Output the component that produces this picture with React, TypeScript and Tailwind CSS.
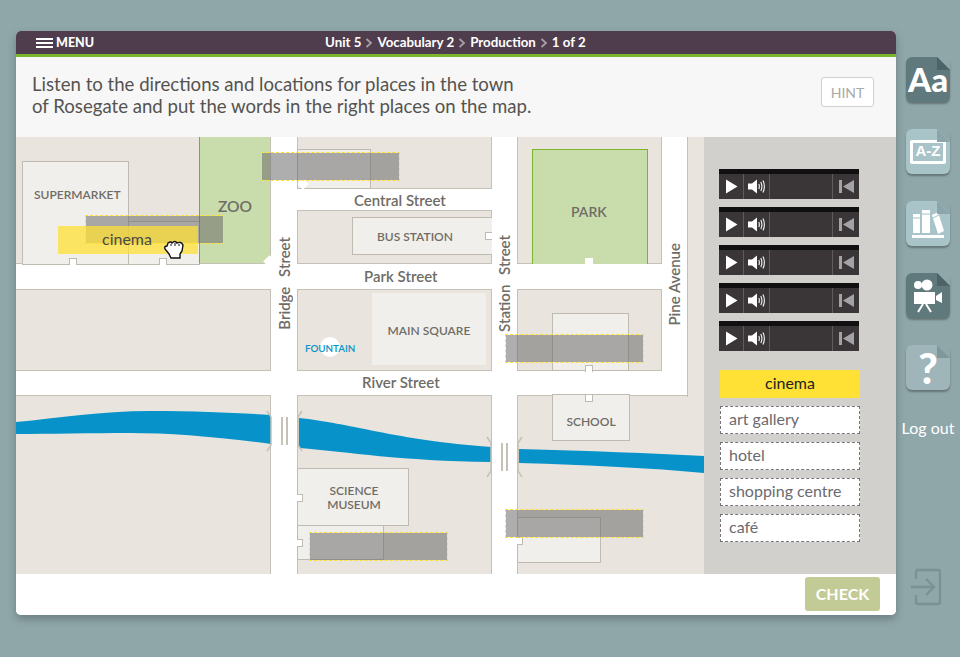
import { Fragment } from "react";

const crumbs = ["Unit 5", "Vocabulary 2", "Production", "1 of 2"];
const words = ["art gallery", "hotel", "shopping centre", "café"];

function Chevron() {
  return (
    <svg width="8" height="10" viewBox="0 0 8 10" className="mx-[4px]">
      <path d="M1.5 1 L6 5 L1.5 9" fill="none" stroke="#a79ea6" strokeWidth="1.8" />
    </svg>
  );
}

function AudioBar() {
  return (
    <div className="w-[140px] h-[30px] bg-[#3a3637] border-t-[5px] border-[#111010] flex">
      <div className="w-[25px] flex items-center justify-center border-r border-[#605c5d]">
        <svg width="13" height="15" viewBox="0 0 13 15">
          <path d="M1 0.5 L12.5 7.5 L1 14.5 Z" fill="#fff" />
        </svg>
      </div>
      <div className="w-[26px] flex items-center justify-center border-r border-[#605c5d]">
        <svg width="18" height="15" viewBox="0 0 18 15">
          <path d="M0 4.5 H4 L9 0.5 V14.5 L4 10.5 H0 Z" fill="#fff" />
          <path d="M10.8 5 Q12 7.5 10.8 10 M12.8 3 Q15 7.5 12.8 12 M15 1.5 Q17.8 7.5 15 13.5" fill="none" stroke="#e8e8e8" strokeWidth="1.2" />
        </svg>
      </div>
      <div className="w-[63px] border-r border-[#605c5d]" />
      <div className="flex-1 flex items-center justify-center">
        <svg width="15" height="13" viewBox="0 0 15 13">
          <path d="M0 0 H3 V13 H0 Z M15 0 V13 L4 6.5 Z" fill="#a3a3a5" />
        </svg>
      </div>
    </div>
  );
}

function Fold({ dark }: { dark: string }) {
  return (
    <svg width="13" height="13" viewBox="0 0 13 13" className="absolute top-0 right-0">
      <path d="M0 0 H13 V13 Z" fill="#90a7aa" />
      <path d="M0 0 L13 13 H0 Z" fill={dark} />
    </svg>
  );
}

function RiverMap() {
  return (
    <svg width="688" height="437" viewBox="16 137 688 437" className="absolute left-0 top-0">
      <path d="M16 422 C60 418 100 411 150 411 C200 411 240 413 271 415 V444 C220 437 170 433 130 433 C90 433 50 434 16 434 Z" fill="#0793c9" />
      <path d="M299 418 C350 423 395 440 491 447 V462 C400 461 350 452 299 448 Z" fill="#0793c9" />
      <path d="M519 449 C590 451 650 453 704 456 V473 C650 468 590 465 519 463 Z" fill="#0793c9" />
      <g fill="none" stroke="#c6c1b7" strokeWidth="1.5">
        <path d="M267 411 L271 417 V445 L267 451" />
        <path d="M302 411 L298 417 V445 L302 451" />
        <path d="M487 437 L491 443 V471 L487 477" />
        <path d="M522 437 L518 443 V471 L522 477" />
      </g>
      <g fill="#c6c1b7">
        <rect x="281" y="417" width="2" height="28" />
        <rect x="286" y="417" width="2" height="28" />
        <rect x="501" y="443" width="2" height="28" />
        <rect x="506" y="443" width="2" height="28" />
      </g>
    </svg>
  );
}

function TownMap() {
  const block = "absolute bg-[#e9e4dd] border border-[#c6c1b7]";
  const bldg = "absolute bg-[#f1efeb] border border-[#c0bbb1]";
  const notchUp = "absolute bg-white border border-[#c0bbb1] border-b-0 w-[8px] h-[7px]";
  const notchDown = "absolute bg-white border border-[#c0bbb1] border-t-0 w-[8px] h-[7px]";
  const notchSide = "absolute bg-white border border-[#c0bbb1] border-l-0 w-[6px] h-[8px]";
  const label = "absolute text-[#6f6c66] font-semibold text-[12px] leading-[14px] text-center";
  const street = "absolute text-[#6f6c66] font-semibold text-[15px] leading-[16px] whitespace-nowrap";
  const vstreet = "absolute text-[#6f6c66] font-semibold text-[15px] leading-[16px] whitespace-nowrap [writing-mode:vertical-rl] rotate-180";
  const drop = "absolute w-[139px] h-[29px] bg-[rgba(107,107,107,0.55)] bg-clip-padding border border-dashed border-[#ffe035]";

  return (
    <div className="relative w-[688px] h-[437px] bg-white overflow-hidden">
      <div className={`${block} left-[-2px] top-[-2px] w-[257px] h-[129px]`} />
      <div className={`${bldg} left-[6px] top-[24px] w-[107px] h-[104px]`} />
      <div className={`${bldg} left-[112px] top-[84px] w-[72px] h-[44px]`} />
      <div className={`${notchUp} left-[53px] top-[121px]`} />
      <div className={`${notchUp} left-[143px] top-[121px]`} />
      <div className="absolute left-[183px] top-0 w-[72px] h-[127px] bg-[#c9dcab] border-l border-l-[#7f9f5f] border-r border-b border-[#c6c1b7]" />
      <div className="absolute left-[249px] top-[120px] w-[9px] h-[9px] rotate-45 bg-white" />
      <div className={`${block} left-[-2px] top-[152px] w-[257px] h-[82px]`} />

      <div className={`${block} left-[281px] top-[-2px] w-[195px] h-[54px]`} />
      <div className={`${bldg} left-[281px] top-[12px] w-[74px] h-[40px]`} />
      <div className="absolute left-[283px] top-[43px] w-[8px] h-[8px] rotate-45 bg-white" />
      <div className={`${block} left-[281px] top-[73px] w-[195px] h-[54px]`} />
      <div className={`${bldg} left-[336px] top-[80px] w-[140px] h-[38px] border-r-0`} />
      <div className="absolute left-[469px] top-[95px] w-[7px] h-[8px] bg-white border border-[#c0bbb1] border-r-0" />
      <div className={`${block} left-[281px] top-[152px] w-[195px] h-[82px]`} />
      <div className="absolute left-[356px] top-[156px] w-[114px] h-[72px] bg-[#f1efeb]" />
      <div className="absolute left-[304px] top-[200px] w-[20px] h-[20px] rounded-full bg-white" />

      <div className={`${block} left-[501px] top-[-2px] w-[145px] h-[129px]`} />
      <div className="absolute left-[516px] top-[12px] w-[116px] h-[115px] bg-[#c9dcab] border border-[#7ab62c] border-b-0" />
      <div className="absolute left-[569px] top-[121px] w-[8px] h-[7px] bg-white" />
      <div className={`${block} left-[501px] top-[152px] w-[145px] h-[82px]`} />
      <div className={`${bldg} left-[536px] top-[176px] w-[77px] h-[58px]`} />
      <div className={`${notchUp} left-[569px] top-[228px]`} />

      <div className={`${block} left-[-2px] top-[258px] w-[257px] h-[181px]`} />
      <div className={`${block} left-[281px] top-[258px] w-[195px] h-[181px]`} />
      <div className={`${block} left-[501px] top-[258px] w-[189px] h-[181px]`} />
      <div className="absolute left-[671px] top-[-2px] w-[19px] h-[262px] bg-[#e9e4dd] border-l border-[#c6c1b7]" />
      <div className={`${bldg} left-[536px] top-[257px] w-[78px] h-[47px]`} />
      <div className={`${notchDown} left-[569px] top-[258px]`} />
      <div className={`${bldg} left-[281px] top-[331px] w-[112px] h-[58px]`} />
      <div className={`${bldg} left-[281px] top-[388px] w-[87px] h-[35px]`} />
      <div className={`${notchSide} left-[281px] top-[357px]`} />
      <div className={`${notchSide} left-[281px] top-[402px]`} />
      <div className={`${bldg} left-[501px] top-[380px] w-[84px] h-[46px]`} />
      <div className={`${notchSide} left-[501px] top-[400px]`} />

      <RiverMap />

      <span className={`${label} left-[18px] top-[51px] w-[84px] text-[11.5px]`}>SUPERMARKET</span>
      <span className="absolute left-[202px] top-[60px] text-[#6f6c66] font-semibold text-[15.5px] leading-[18px]">ZOO</span>
      <span className={`${label} left-[357px] top-[93px] w-[84px]`}>BUS STATION</span>
      <span className="absolute left-[555px] top-[66px] text-[#6f6c66] font-semibold text-[14px] leading-[18px]">PARK</span>
      <span className={`${label} left-[366px] top-[187px] w-[94px]`}>MAIN SQUARE</span>
      <span className="absolute left-[289px] top-[205px] text-[#0793c9] font-semibold text-[9.8px] leading-[13px]">FOUNTAIN</span>
      <span className={`${label} left-[536px] top-[278px] w-[78px]`}>SCHOOL</span>
      <span className={`${label} left-[295px] top-[347px] w-[86px]`}>
        SCIENCE
        <br />
        MUSEUM
      </span>

      <span className={`${street} left-[338px] top-[55px]`}>Central Street</span>
      <span className={`${street} left-[348px] top-[131px]`}>Park Street</span>
      <span className={`${street} left-[346px] top-[237px]`}>River Street</span>
      <span className={`${vstreet} left-[260px] top-[100px] [word-spacing:6px]`}>Bridge Street</span>
      <span className={`${vstreet} left-[480px] top-[98px] [word-spacing:6px]`}>Station Street</span>
      <span className={`${vstreet} left-[650px] top-[106px]`}>Pine Avenue</span>

      <div className={`${drop} left-[245px] top-[15px]`} />
      <div className={`${drop} left-[69px] top-[78px]`} />
      <div className={`${drop} left-[489px] top-[197px]`} />
      <div className={`${drop} left-[489px] top-[372px]`} />
      <div className={`${drop} left-[293px] top-[395px]`} />

      <div className="absolute left-[42px] top-[89px] w-[140px] h-[28px] bg-[#ffe035]/75 rounded-[1px] flex items-center justify-center pr-[2px] pb-[3px] text-[16px] text-[#4a4a44]">
        cinema
      </div>
      <svg width="22" height="19" viewBox="0 0 22 19" className="absolute left-[147px] top-[103px]">
        <path
          d="M2 9 Q1 6 4 6 L5 3 Q8 1 9 3 Q12 0 14 3 Q18 1 20 5 L19 11 L17 14 V18 H8 L6 14 Z"
          fill="#fff"
          stroke="#111"
          strokeWidth="1.4"
        />
        <path d="M8 4 V6 M12 3 V6 M16 4 V6" stroke="#111" strokeWidth="1" />
      </svg>
    </div>
  );
}

export default function App() {
  const tile = "relative w-[44px] h-[45px] rounded-[6px] flex items-center justify-center text-white font-bold shadow-[0_2px_2px_rgba(0,0,0,0.3)]";

  return (
    <div className="w-[960px] h-[657px] bg-[#90a7aa] flex font-['Lato','Liberation_Sans',sans-serif] overflow-hidden">
      <div className="w-[896px] pt-[31px] pl-4">
        <div className="w-[880px] h-[584px] rounded-[5px] overflow-hidden flex flex-col bg-white shadow-[0_4px_8px_rgba(0,0,0,0.25)]">
          <div className="h-[23px] bg-[#4f3d4d] flex items-center pl-[20px] text-white text-[13.3px] font-bold">
            <div className="w-[17px] flex flex-col gap-[2px]">
              <div className="h-[2px] bg-white" />
              <div className="h-[2px] bg-white" />
              <div className="h-[2px] bg-white" />
            </div>
            <span className="ml-[3px] mt-[1px] font-black text-[12.5px]">MENU</span>
            <div className="flex items-center ml-[231px]">
              {crumbs.map((c, i) => (
                <Fragment key={c}>
                  {i > 0 && <Chevron />}
                  <span>{c}</span>
                </Fragment>
              ))}
            </div>
          </div>
          <div className="h-[3px] bg-[#7ab62c]" />
          <div className="h-[80px] bg-[#f7f7f7] flex items-start justify-between pl-4 pr-[22px]">
            <p className="mt-[16px] text-[18.6px] leading-[22px] text-[#55534f]">
              Listen to the directions and locations for places in the town
              <br />
              of Rosegate and put the words in the right places on the map.
            </p>
            <div className="mt-[20px] w-[53px] h-[30px] border border-[#cfcfcf] rounded-[3px] bg-white flex items-center justify-center text-[14px] text-[#a9a9a9]">
              HINT
            </div>
          </div>
          <div className="flex h-[437px]">
            <TownMap />
            <div className="w-[192px] bg-[#d1d0cc] pt-[32px] pl-[15px]">
              <div className="flex flex-col gap-[8px]">
                <AudioBar />
                <AudioBar />
                <AudioBar />
                <AudioBar />
                <AudioBar />
              </div>
              <div className="mt-[19px] ml-[1px] w-[140px] flex flex-col gap-[8px] text-[16px]">
                <div className="h-[28px] bg-[#ffe035] flex items-center justify-center pb-[3px] text-[#222]">cinema</div>
                {words.map((w) => (
                  <div key={w} className="h-[28px] bg-white border border-dashed border-[#77757a] flex items-center pl-[8px] pb-[2px] text-[#6c6a6e]">
                    {w}
                  </div>
                ))}
              </div>
            </div>
          </div>
          <div className="flex-1 bg-white flex justify-end items-start pt-[3px] pr-[16px]">
            <div className="w-[75px] h-[34px] rounded-[3px] bg-[#c2cb96] flex items-center justify-center text-white font-bold text-[16px]">
              CHECK
            </div>
          </div>
        </div>
      </div>

      <div className="flex-1 flex flex-col items-center pt-[57px] gap-[27px] text-white">
        <div className={`${tile} bg-[#5f797d] text-[33px]`}>
          <Fold dark="#4c6367" />
          <span className="font-black leading-none">Aa</span>
        </div>
        <div className={`${tile} bg-[#a9c4c8] text-[15px]`}>
          <Fold dark="#8ba6aa" />
          <span className="w-[36px] h-[24px] border-[3px] border-white rounded-[2px] flex items-center justify-center font-['Liberation_Sans',sans-serif]">A-Z</span>
        </div>
        <div className={`${tile} bg-[#a9c4c8]`}>
          <Fold dark="#8ba6aa" />
          <svg width="32" height="30" viewBox="0 0 32 30">
            <path d="M1 5 H8 V24 H1 Z M10 1 H18 V24 H10 Z" fill="#fff" />
            <path d="M20 6 L26 3 L32 22 L26 25 Z" fill="#fff" />
            <rect x="0" y="26" width="32" height="3" fill="#fff" />
            <path d="M1 9 H8 M10 5 H18 M21 9 L27 6" stroke="#a9c4c8" strokeWidth="1" />
          </svg>
        </div>
        <div className={`${tile} bg-[#5f797d]`}>
          <Fold dark="#4c6367" />
          <svg width="30" height="34" viewBox="0 0 30 34">
            <circle cx="5" cy="6" r="4" fill="#fff" />
            <circle cx="14" cy="6" r="5.5" fill="#fff" />
            <rect x="1" y="13" width="21" height="12" fill="#fff" />
            <path d="M23 17 L29 13 V24 L23 21 Z" fill="#fff" />
            <path d="M10 25 L5 33 M13 25 L18 33" stroke="#fff" strokeWidth="2" fill="none" />
          </svg>
        </div>
        <div className={`${tile} bg-[#9fb5ba] text-[42px]`}>
          <Fold dark="#7f979b" />
          <span className="font-black leading-none">?</span>
        </div>
        <span className="mt-[2px] text-[16px] leading-[18px]">Log out</span>
        <svg width="32" height="38" viewBox="0 0 32 38" className="mt-[104px] -ml-[5px]">
          <path d="M6 11 V4 Q6 2 8 2 H28 Q30 2 30 4 V34 Q30 36 28 36 H8 Q6 36 6 34 V27" fill="none" stroke="#7a9195" strokeWidth="2.4" />
          <path d="M1 19 H23 M16 11 L24 19 L16 27" fill="none" stroke="#7a9195" strokeWidth="2.4" />
        </svg>
      </div>
    </div>
  );
}
